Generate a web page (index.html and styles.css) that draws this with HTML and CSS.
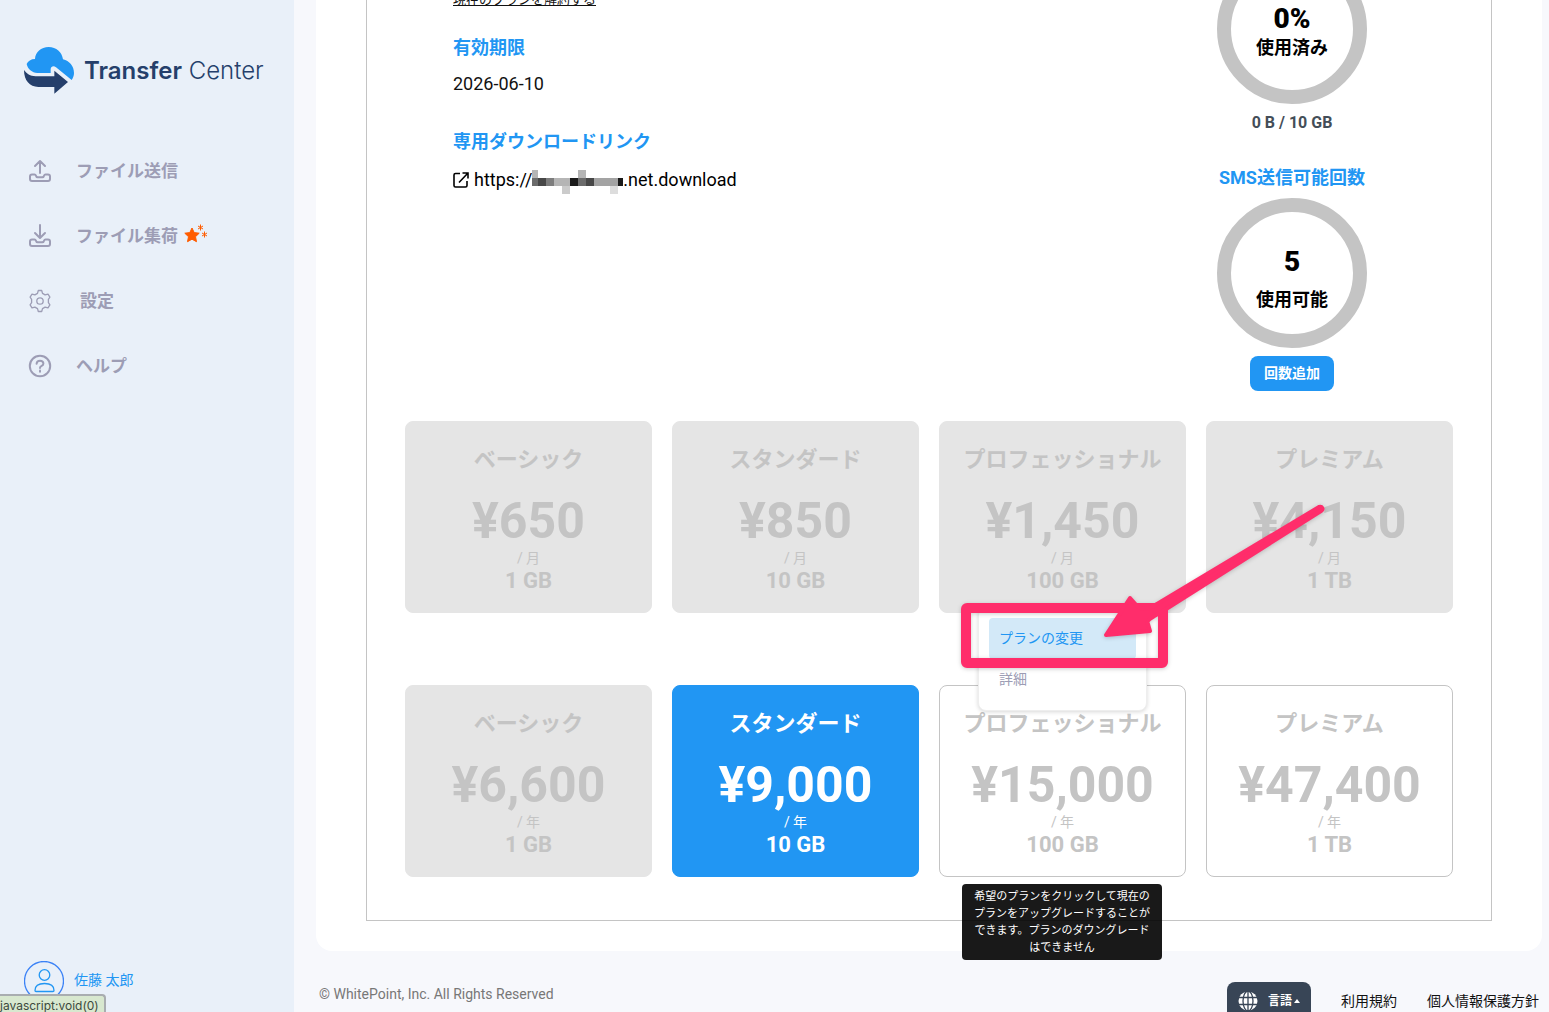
FILE: index.html
```html
<!DOCTYPE html>
<html lang="ja">
<head>
<meta charset="utf-8">
<meta name="viewport" content="width=device-width, initial-scale=1">
<title>Transfer Center</title>
<link rel="stylesheet" href="styles.css">
</head>
<body>
<div class="app">
  <aside class="sidebar">
    <a class="logo" href="#">
      <svg class="logo-mark" viewBox="0 0 150 144" aria-hidden="true">
        <path fill="#2196f3" d="M8 51C12 42 21 36 33 36C34 15 51 0 74 0C97 0 114 15 117 37C136 42 150 57 150 78C150 86 147 93 143 99L96 61C89 55 81 58 80 66L80 78L40 78C24 77 11 66 8 51Z"/>
        <path fill="#253f6b" d="M0 69C8 80 18 87 35 88L91 88L91 71L132 105L91 140L91 120L43 120C17 119 0 101 0 69Z"/>
      </svg>
      <span class="logo-text"><b>Transfer</b> Center</span>
    </a>
    <nav class="nav">
      <a class="nav-item" href="#">
        <svg class="icon" viewBox="0 0 22 22" aria-hidden="true"><path d="M11 13V1M6 6l5-5 5 5M3 14.500h2.500q1 0 1.400 1l.4 1q.3 .7 1.200 .7h5q.9 0 1.200-.7l.4-1q.4-1 1.400-1H19q2 0 2 2V19q0 2-2 2H3q-2 0-2-2V16.500q0-2 2-2Z"/></svg>
        <span>ファイル送信</span>
      </a>
      <a class="nav-item" href="#">
        <svg class="icon" viewBox="0 0 22 22" aria-hidden="true"><path d="M11 0v12.500M6 8l5 5 5-5M3 14.500h2.500q1 0 1.400 1l.4 1q.3 .7 1.200 .7h5q.9 0 1.200-.7l.4-1q.4-1 1.400-1H19q2 0 2 2V19q0 2-2 2H3q-2 0-2-2V16.500q0-2 2-2Z"/></svg>
        <span>ファイル集荷</span>
        <svg class="sparkle" viewBox="0 0 24 20" aria-hidden="true">
          <path fill="#ff5c00" stroke="#ff5c00" stroke-linejoin="round" d="M8 4l2.200 4.600 5 .6-3.700 3.500 1 5L8 15.200l-4.500 2.500 1-5L.8 9.200l5-.6Z"/>
          <path fill="none" stroke="#ff5c00" d="M16.500 .5v6M14 2l5 3M19 2l-5 3M20.500 7.500v6M18 9l5 3M23 9l-5 3"/>
        </svg>
      </a>
      <a class="nav-item nav-item-wide" href="#">
        <svg class="icon icon-thin" viewBox="0 0 22 22" aria-hidden="true"><path d="M9.300 .5h3.400l.8 2.900 2.600 1.500 2.900-.8 1.900 3.100-1.500 2.100v3.400l1.500 2.100-1.900 3.100-2.900-.8-2.600 1.500-.8 2.900H9.300l-.8-2.900-2.600-1.500-2.900.8-1.900-3.100 1.500-2.100V9.300L1.100 7.200 3 4.100l2.900.8 2.600-1.500Z"/><circle cx="11" cy="11" r="3.200"/></svg>
        <span>設定</span>
      </a>
      <a class="nav-item" href="#">
        <svg class="icon" viewBox="0 0 22 22" aria-hidden="true"><circle cx="11" cy="11" r="10.200"/><path d="M7.600 8.700q.2-2.900 3.400-2.900t3.400 2.700q0 1.600-1.700 2.400T11 13"/><path d="M11 15.400v1.400"/></svg>
        <span>ヘルプ</span>
      </a>
    </nav>
    <a class="user" href="#">
      <svg class="avatar" viewBox="0 0 40 40" aria-hidden="true"><circle cx="20" cy="20" r="19.500" stroke="#3b82f6"/><circle cx="20.500" cy="14" r="5.300"/><path d="M12 30.500q-1 0-1-1 0-7 9.500-7t9.500 7q0 1-1 1Z"/></svg>
      <span>佐藤 太郎</span>
    </a>
    <div class="status">javascript:void(0)</div>
  </aside>

  <div class="page">
    <main class="card">
      <div class="box">
        <div class="details">
          <section class="contract">
            <a class="cancel" href="#">現在のプランを解約する</a>
            <h2>有効期限</h2>
            <p>2026-06-10</p>
            <h2>専用ダウンロードリンク</h2>
            <a class="download" href="#">
              <svg class="external" viewBox="0 0 16 16" aria-hidden="true"><path d="M7 1.500H2.500q-1.500 0-1.500 1.500V13.500q0 1.500 1.500 1.500h10q1.500 0 1.500-1.500V9M6 10.500l8.500-9M9.500 1H15v5.500"/></svg>
              <span>https://</span><svg class="mosaic" viewBox="0 0 91 24" aria-hidden="true">
                <path fill="#b5b5b5" d="M0 0h6v8H0ZM46 0h8v8h-8ZM22 8h16v8H22Z"/>
                <path fill="#6b6b6b" d="M0 8h6v8H0ZM46 8h8v8h-8Z"/>
                <path fill="#474747" d="M6 8h8v8H6ZM54 8h8v8h-8Z"/>
                <path fill="#7d7d7d" d="M14 8h8v8h-8Z"/>
                <path fill="#1a1a1a" d="M38 8h8v8h-8ZM86 8h5v8h-5Z"/>
                <path fill="#a3a3a3" d="M62 8h24v8H62Z"/>
                <path fill="#cbcbcb" d="M30 16h8v8h-8Z"/>
                <path fill="#dddddd" d="M78 16h8v8h-8Z"/>
              </svg><span>.net.download</span>
            </a>
          </section>
          <section class="usage">
            <div class="ring"><strong>0%</strong><span>使用済み</span></div>
            <p class="quota">0 B / 10 GB</p>
            <h2>SMS送信可能回数</h2>
            <div class="ring ring-sms"><strong>5</strong><span>使用可能</span></div>
            <button class="add" type="button">回数追加</button>
          </section>
        </div>

        <ul class="plans">
          <li><button class="plan" type="button" disabled><span class="name">ベーシック</span><span class="price">¥650</span><span class="term">/ 月</span><span class="size">1 GB</span></button></li>
          <li><button class="plan" type="button" disabled><span class="name">スタンダード</span><span class="price">¥850</span><span class="term">/ 月</span><span class="size">10 GB</span></button></li>
          <li><button class="plan" type="button" disabled><span class="name">プロフェッショナル</span><span class="price">¥1,450</span><span class="term">/ 月</span><span class="size">100 GB</span></button></li>
          <li><button class="plan" type="button" disabled><span class="name">プレミアム</span><span class="price">¥4,150</span><span class="term">/ 月</span><span class="size">1 TB</span></button></li>
          <li><button class="plan" type="button" disabled><span class="name">ベーシック</span><span class="price">¥6,600</span><span class="term">/ 年</span><span class="size">1 GB</span></button></li>
          <li><button class="plan plan-current" type="button"><span class="name">スタンダード</span><span class="price">¥9,000</span><span class="term">/ 年</span><span class="size">10 GB</span></button></li>
          <li class="open">
            <button class="plan" type="button"><span class="name">プロフェッショナル</span><span class="price">¥15,000</span><span class="term">/ 年</span><span class="size">100 GB</span></button>
            <div class="menu">
              <a class="menu-item menu-item-active" href="#">プランの変更</a>
              <a class="menu-item" href="#">詳細</a>
            </div>
            <div class="tooltip" role="tooltip">希望のプランをクリックして現在のプランをアップグレードすることができます。プランのダウングレードはできません</div>
            <svg class="callout" viewBox="0 0 380 180" aria-hidden="true">
              <rect x="15" y="114" width="197" height="55" rx="1" fill="none" stroke="#ff2d6b" stroke-width="10" stroke-linejoin="round"/>
              <path fill="#ff2d6b" stroke="#ff2d6b" stroke-width="4" stroke-linejoin="round" d="M155 141L179 104L187 113C193 116 197 116 206 110L368 13C371 12 373 15 370 17L212 117C204 122 194 126 197 130L199 137Z"/>
            </svg>
          </li>
          <li><button class="plan" type="button"><span class="name">プレミアム</span><span class="price">¥47,400</span><span class="term">/ 年</span><span class="size">1 TB</span></button></li>
        </ul>
      </div>
    </main>
    <footer class="footer">
      <p>© WhitePoint, Inc. All Rights Reserved</p>
      <button class="language" type="button">
        <svg class="globe" viewBox="0 0 20 20" aria-hidden="true"><circle cx="10" cy="10" r="9.500" fill="#fff"/><path fill="none" stroke="#384556" stroke-width="1.300" d="M0 6.500h20M0 13.500h20M10 0v20"/><ellipse cx="10" cy="10" rx="5" ry="10" fill="none" stroke="#384556" stroke-width="1.300"/></svg>
        <span>言語</span>
        <svg class="caret" viewBox="0 0 6 4" aria-hidden="true"><path fill="#fff" d="M0 4L3 0l3 4Z"/></svg>
      </button>
      <a href="#">利用規約</a>
      <a href="#">個人情報保護方針</a>
    </footer>
  </div>
</div>
</body>
</html>
```
FILE: styles.css
```css
* { box-sizing: border-box; }

body {
  margin: 0;
  overflow: hidden;
  background: #f7f8fc;
  color: #111;
  font-family: Roboto, "Noto Sans CJK JP", sans-serif;
}

h2, p, ul { margin: 0; padding: 0; }
a { color: inherit; text-decoration: none; }
button { font: inherit; border: 0; cursor: pointer; }

.app { display: flex; height: 100vh; }

/* Sidebar */
.sidebar {
  position: relative;
  display: flex;
  flex-direction: column;
  flex: 0 0 294px;
  padding: 47px 24px 11px;
  background: #e9f0f9;
}
.logo { display: flex; align-items: center; gap: 10px; color: #253f6b; }
.logo-mark { width: 50px; height: 48px; }
.logo-text { font: 300 24px/32px Inter, sans-serif; white-space: nowrap; }
.logo-text b { font-weight: 600; }

.nav { display: flex; flex-direction: column; gap: 41px; margin-top: 64px; padding-left: 5px; }
.nav-item {
  display: flex;
  align-items: center;
  gap: 25px;
  color: #9d9db5;
  font-size: 17px;
  line-height: 24px;
  font-weight: 700;
}
.nav-item-wide { gap: 29px; }
.icon { width: 22px; height: 22px; overflow: visible; fill: none; stroke: currentColor; stroke-width: 2; stroke-linecap: round; stroke-linejoin: round; }
.icon-thin { stroke-width: 1.3; }
.sparkle { width: 24px; height: 20px; margin: -5px 0 0 -19px; }

.user { display: flex; align-items: center; gap: 10px; margin-top: auto; color: #2196f3; font-size: 14px; }
.user span { padding-bottom: 4px; }
.avatar { width: 40px; height: 40px; fill: none; stroke: #2196f3; stroke-width: 1.3; }
.status {
  position: absolute;
  left: 0;
  bottom: 0;
  width: 106px;
  height: 18px;
  border: solid #a9adb0;
  border-width: 2px 2px 0 0;
  border-radius: 0 4px 0 0;
  background: #d8e8cf;
  color: #3d4a3d;
  font: 12px/20px Inter, sans-serif;
  white-space: nowrap;
}

/* Content, shown scrolled down */
.page { flex: 1; min-width: 0; padding: 0 7px 0 22px; }
.card { margin-top: -110px; padding: 30px 50px; border-radius: 16px; background: #fff; }
.box { padding: 33px 38px 43px; border: 1px solid #c4c4c4; }

.details { display: flex; justify-content: space-between; margin-bottom: 30px; padding-left: 48px; }
h2 { color: #2196f3; font-size: 18px; line-height: 24px; font-weight: 700; }
.contract { padding-top: 36px; font-size: 18px; line-height: 24px; }
.contract h2 { margin: 34px 0 12px; }
.cancel { display: block; margin-bottom: -8px; font-size: 13px; line-height: 20px; text-decoration: underline; }
.download { display: flex; align-items: center; color: #000; }
.external { width: 16px; height: 16px; margin-right: 5px; fill: none; stroke: #000; stroke-width: 1.6; }
.mosaic { width: 91px; height: 24px; margin-top: 4px; }

.usage { display: flex; flex-direction: column; align-items: center; flex: 0 0 322px; }
.ring {
  display: flex;
  flex-direction: column;
  align-items: center;
  justify-content: center;
  gap: 1px;
  width: 150px;
  height: 150px;
  padding-top: 5px;
  border: 14px solid #c4c4c4;
  border-radius: 50%;
  color: #000;
  font-size: 18px;
  line-height: 24px;
  font-weight: 700;
}
.ring strong { font-size: 28px; line-height: 32px; }
.ring-sms { gap: 10px; margin-top: 8px; padding-top: 12px; }
.quota { margin: 9px 0 33px; color: #444e58; font-size: 16px; line-height: 20px; font-weight: 700; }
.add { margin-top: 8px; padding: 0 14px; border-radius: 8px; background: #2196f3; color: #fff; font-size: 14px; line-height: 35px; font-weight: 700; }

/* Plans */
.plans { display: grid; grid-template-columns: repeat(4, 1fr); gap: 72px 20px; list-style: none; }
.plan {
  display: flex;
  flex-direction: column;
  align-items: center;
  width: 100%;
  padding: 22px 8px 18px;
  border: 1px solid #c4c4c4;
  border-radius: 8px;
  background: #fff;
  color: #c4c4c4;
  font-weight: 700;
}
.plan:disabled { border-color: #e5e5e5; background: #e5e5e5; cursor: default; }
.plan-current { border-color: #2196f3; background: #2196f3; color: #fff; }
.name { font-size: 22px; line-height: 32px; white-space: nowrap; }
.price { margin-top: 17px; font-size: 50px; line-height: 56px; }
.term { font-size: 14px; line-height: 18px; font-weight: 400; }
.size { font-size: 22px; line-height: 27px; }

.open { position: relative; z-index: 1; }
.menu {
  position: absolute;
  left: 39px;
  bottom: calc(100% - 26px);
  width: 169px;
  padding: 10px;
  border: 1px solid #eee;
  border-radius: 8px;
  background: #fff;
  box-shadow: 0 1px 4px rgba(0, 0, 0, .16);
}
.menu-item { display: block; padding: 0 10px; border-radius: 4px; color: #9d9db5; font-size: 14px; line-height: 41px; }
.menu-item-active { background: #d3e9f8; color: #2196f3; }
.tooltip {
  position: absolute;
  top: calc(100% + 7px);
  left: 23px;
  width: 200px;
  padding: 4px 12px;
  border-radius: 4px;
  background: rgba(0, 0, 0, .9);
  color: #fff;
  font-size: 11px;
  line-height: 17px;
  text-align: center;
}
.callout {
  position: absolute;
  left: 12px;
  bottom: calc(100% + 11px);
  width: 380px;
  height: 180px;
  filter: drop-shadow(0 1px 2px rgba(0, 0, 0, .2));
  pointer-events: none;
}

/* Footer */
.footer { display: flex; gap: 30px; padding: 31px 3px 0; font-size: 14px; line-height: 38px; }
.footer p { margin-right: auto; color: #777; line-height: 24px; }
.language { display: flex; align-items: center; gap: 10px; height: 38px; padding: 0 11px; border-radius: 8px; background: #384556; color: #fff; font-size: 12px; font-weight: 700; }
.globe { width: 20px; height: 20px; }
.caret { width: 6px; height: 4px; margin-left: -8px; }
```
